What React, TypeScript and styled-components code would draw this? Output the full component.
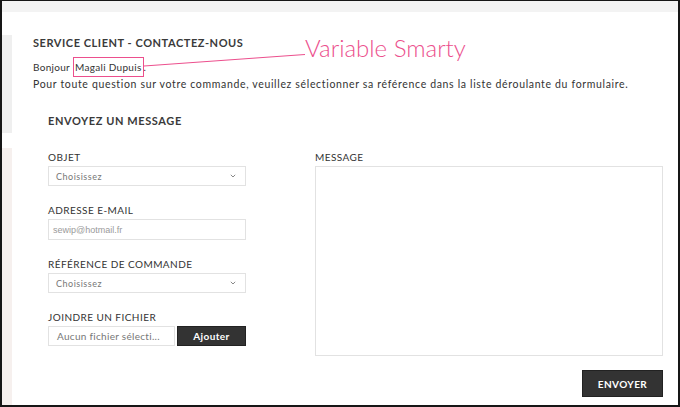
import React from 'react'
import styled, { createGlobalStyle } from 'styled-components'

const GlobalStyle = createGlobalStyle`
	html, body {
		margin: 0;
		padding: 0;
		background: #fff;
	}
	body {
		font-family: Lato, 'Open Sans', sans-serif;
		color: #333;
	}
	* {
		box-sizing: border-box;
	}
`

const PINK = '#ec4f8d'

const Screen = styled.div`
	position: relative;
	width: 680px;
	height: 407px;
	overflow: hidden;
`

const Frame = styled.div`
	width: 100%;
	height: 100%;
	border: 2px solid #161616;
	border-top-width: 1px;
	display: flex;
	flex-direction: column;
	background: #fff;
`

const TopBand = styled.div`
	height: 11px;
	flex: none;
	background: #f3f3f3;
`

const Body = styled.div`
	flex: 1;
	display: flex;
	min-height: 0;
`

const Side = styled.div`
	width: 10px;
	flex: none;
	display: flex;
	flex-direction: column;
	padding-top: 23px;
	gap: 15px;
`

const SideBlock = styled.div<{ $tone: 'grey' | 'pink' }>`
	background: ${(p) => (p.$tone === 'grey' ? '#efefef' : '#f6f0ee')};
	${(p) => (p.$tone === 'grey' ? 'height: 98px;' : 'flex: 1;')}
`

const Main = styled.div`
	flex: 1;
	padding-left: 21px;
`

const Title = styled.h1`
	margin: 24px 0 0;
	font-size: 11px;
	line-height: 13px;
	font-weight: 700;
	letter-spacing: 0.55px;
	color: #3a3a3a;
`

const Greeting = styled.div`
	margin-top: 8px;
	display: flex;
	align-items: center;
	font-size: 10px;
	letter-spacing: 0.3px;
	color: #333;
`

const Highlight = styled.span`
	display: inline-block;
	border: 1px solid ${PINK};
	padding: 3px 1px;
	line-height: 12px;
	margin-left: 3px;
`

const Intro = styled.p`
	margin: 0;
	font-size: 10.5px;
	line-height: 14px;
	letter-spacing: 0.66px;
	color: #333;
`

const FormSection = styled.section`
	padding-left: 15px;
`

const SectionTitle = styled.h2`
	margin: 23px 0 0;
	font-size: 11px;
	line-height: 13px;
	font-weight: 700;
	letter-spacing: 0.6px;
	color: #3a3a3a;
`

const FormGrid = styled.div`
	margin-top: 24px;
	display: grid;
	grid-template-columns: 198px 348px;
	column-gap: 69px;
`

const Column = styled.div`
	display: flex;
	flex-direction: column;
`

const Field = styled.div`
	display: flex;
	flex-direction: column;
	& + & {
		margin-top: 18px;
	}
`

const Label = styled.label`
	font-size: 10px;
	line-height: 12px;
	letter-spacing: 0.45px;
	color: #333;
	margin-bottom: 3px;
	text-transform: uppercase;
`

const Select = styled.div`
	height: 20px;
	border: 1px solid #e2e2e2;
	display: flex;
	align-items: center;
	justify-content: space-between;
	padding: 0 9px 0 7px;
	font-size: 9px;
	letter-spacing: 0.5px;
	color: #777;
`

const TextInput = styled.div`
	height: 21px;
	border: 1px solid #e2e2e2;
	display: flex;
	align-items: center;
	padding: 0 4px;
	font-family: 'Liberation Sans', Arial, sans-serif;
	font-size: 9px;
	color: #9a9a9a;
`

const FileRow = styled.div`
	display: flex;
	gap: 2px;
	height: 20px;
`

const FileName = styled.div`
	width: 127px;
	border: 1px solid #e2e2e2;
	display: flex;
	align-items: center;
	padding-left: 8px;
	font-size: 10px;
	letter-spacing: 0.3px;
	color: #777;
	white-space: nowrap;
`

const DarkButton = styled.button<{ $size: 'small' | 'large' }>`
	border: 1px solid #222;
	background: #333;
	color: #fff;
	font-family: Lato, sans-serif;
	font-weight: 700;
	cursor: pointer;
	padding: 0;
	${(p) =>
		p.$size === 'small'
			? `flex: 1; font-size: 10px; letter-spacing: 0.4px;`
			: `width: 81px; height: 27px; font-size: 10px; letter-spacing: 0.4px;`}
`

const MessageBox = styled.div`
	height: 190px;
	border: 1px solid #e2e2e2;
`

const SubmitRow = styled.div`
	grid-column: 1 / -1;
	display: flex;
	justify-content: flex-end;
	margin-top: 14px;
`

const Overlay = styled.svg`
	position: absolute;
	top: 0;
	left: 0;
	pointer-events: none;
`

const Note = styled.div`
	position: absolute;
	left: 305px;
	top: 36px;
	font-family: Lato, sans-serif;
	font-weight: 300;
	font-size: 24px;
	line-height: 24px;
	color: ${PINK};
	white-space: nowrap;
	pointer-events: none;
`

const Chevron = () => (
	<svg width="6" height="4" viewBox="0 0 6 4">
		<path d="M0.8 0.8l2.2 2.2 2.2-2.2" fill="none" stroke="#888" strokeWidth="1" />
	</svg>
)

export default function App() {
	return (
		<Screen>
			<GlobalStyle />
			<Frame>
				<TopBand />
				<Body>
					<Side>
						<SideBlock $tone="grey" />
						<SideBlock $tone="pink" />
					</Side>
					<Main>
						<Title>SERVICE CLIENT - CONTACTEZ-NOUS</Title>
						<Greeting>
							Bonjour <Highlight>Magali Dupuis</Highlight>.
						</Greeting>
						<Intro>
							Pour toute question sur votre commande, veuillez sélectionner sa
							référence dans la liste déroulante du formulaire.
						</Intro>
						<FormSection>
							<SectionTitle>ENVOYEZ UN MESSAGE</SectionTitle>
							<FormGrid>
								<Column>
									<Field>
										<Label>Objet</Label>
										<Select>
											Choisissez
											<Chevron />
										</Select>
									</Field>
									<Field>
										<Label>Adresse e-mail</Label>
										<TextInput>sewip@hotmail.fr</TextInput>
									</Field>
									<Field>
										<Label>Référence de commande</Label>
										<Select>
											Choisissez
											<Chevron />
										</Select>
									</Field>
									<Field>
										<Label>Joindre un fichier</Label>
										<FileRow>
											<FileName>Aucun fichier sélecti...</FileName>
											<DarkButton $size="small">Ajouter</DarkButton>
										</FileRow>
									</Field>
								</Column>
								<Column>
									<Field>
										<Label>Message</Label>
										<MessageBox />
									</Field>
								</Column>
								<SubmitRow>
									<DarkButton $size="large">ENVOYER</DarkButton>
								</SubmitRow>
							</FormGrid>
						</FormSection>
					</Main>
				</Body>
			</Frame>
			<Overlay width="680" height="407" viewBox="0 0 680 407">
				<line x1="144" y1="66" x2="305" y2="54.5" stroke={PINK} strokeWidth="1" />
			</Overlay>
			<Note>Variable Smarty</Note>
		</Screen>
	)
}
